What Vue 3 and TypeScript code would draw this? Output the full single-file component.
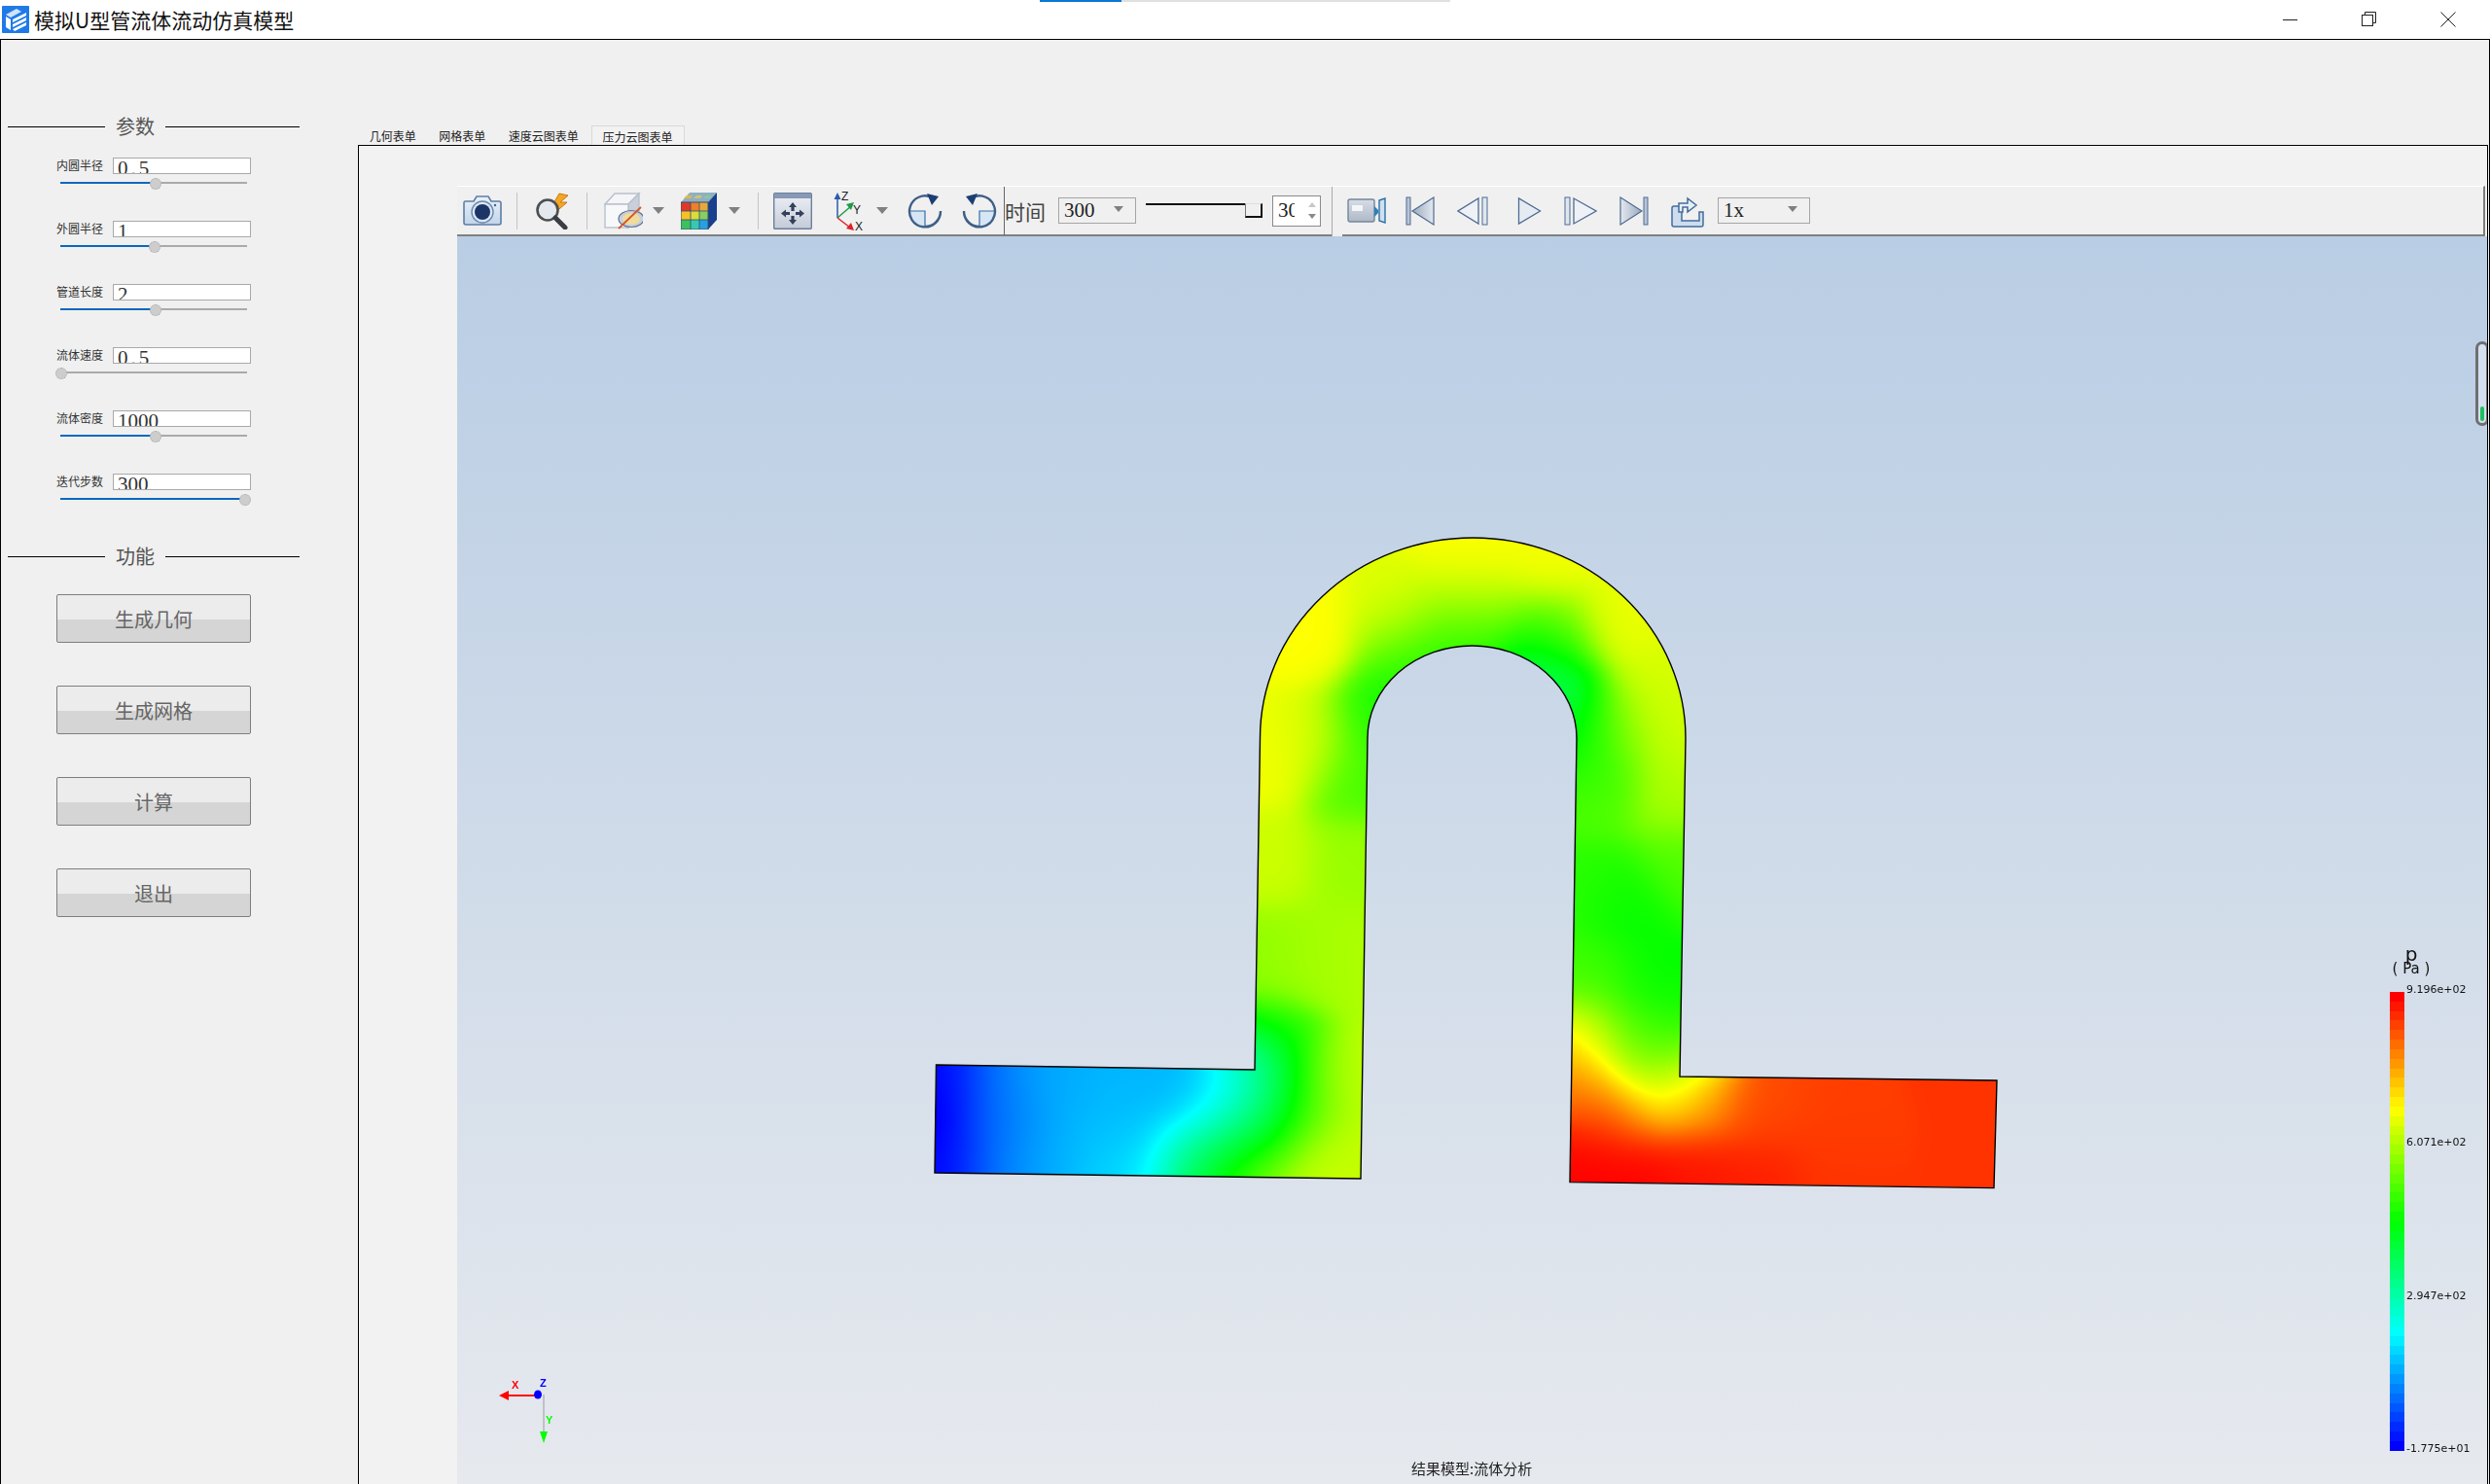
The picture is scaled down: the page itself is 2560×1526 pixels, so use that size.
<script setup lang="ts">
import { ref, onMounted } from 'vue'

const params = [
  { label: '内圆半径', value: '0.5', pos: 0.505, spaced: true },
  { label: '外圆半径', value: '1', pos: 0.5, spaced: false },
  { label: '管道长度', value: '2', pos: 0.505, spaced: false },
  { label: '流体速度', value: '0.5', pos: 0, spaced: true },
  { label: '流体密度', value: '1000', pos: 0.505, spaced: false },
  { label: '迭代步数', value: '300', pos: 0.985, spaced: false }
]
const actions = ['生成几何', '生成网格', '计算', '退出']
const tabs = ['几何表单', '网格表单', '速度云图表单', '压力云图表单']

// 0..1 -> blue, cyan, green, yellow, red
const jet = (v: number): [number, number, number] => {
  const t = Math.max(0, Math.min(1, v)) * 4
  if (t < 1) return [0, 255 * t, 255]
  if (t < 2) return [0, 255, 255 * (2 - t)]
  if (t < 3) return [255 * (t - 2), 255, 0]
  return [255, 255 * (4 - t), 0]
}

const legendBands = Array.from({ length: 48 }, (_, i) => {
  const [r, g, b] = jet(1 - i / 47)
  return `rgb(${Math.round(r)},${Math.round(g)},${Math.round(b)})`
})

// sampled pressure, x/y as read from a 1140x720 crop stretched to 1568 square
const samples: number[][] = [
  [20, 1370, -0.04], [20, 1260, 0], [20, 1490, 0], [60, 1300, 0.02], [60, 1450, 0.02],
  [120, 1370, 0.12], [120, 1280, 0.14], [120, 1470, 0.14], [200, 1300, 0.17], [200, 1450, 0.17],
  [280, 1360, 0.18], [350, 1290, 0.18], [380, 1330, 0.17], [300, 1420, 0.19], [280, 1485, 0.21], [440, 1290, 0.19],
  [470, 1290, 0.22], [490, 1305, 0.27], [440, 1360, 0.25], [400, 1420, 0.26], [345, 1490, 0.25],
  [495, 1360, 0.42], [440, 1450, 0.42], [400, 1495, 0.45], [515, 1290, 0.5], [480, 1395, 0.5],
  [430, 1495, 0.52], [535, 1360, 0.6], [475, 1495, 0.72], [495, 1200, 0.56], [565, 1300, 0.66],
  [560, 1450, 0.7], [625, 1480, 0.69], [625, 1300, 0.69], [490, 1000, 0.64], [560, 1000, 0.66],
  [630, 1000, 0.67], [500, 800, 0.7], [620, 800, 0.65], [630, 600, 0.57], [500, 550, 0.74],
  [560, 520, 0.71], [560, 300, 0.75], [650, 480, 0.52], [700, 340, 0.52], [790, 100, 0.75],
  [790, 190, 0.73], [790, 250, 0.62], [790, 305, 0.5], [680, 250, 0.72], [880, 370, 0.38],
  [930, 480, 0.43], [950, 560, 0.52], [1000, 500, 0.66], [1085, 500, 0.7], [1000, 250, 0.73],
  [900, 120, 0.74], [900, 290, 0.6], [1060, 400, 0.71], [960, 650, 0.58], [1080, 650, 0.67],
  [950, 850, 0.54], [1080, 800, 0.58], [1010, 900, 0.5], [950, 1050, 0.56], [1040, 1100, 0.5],
  [1075, 1200, 0.52], [940, 1200, 0.74], [1000, 1190, 0.6], [1040, 1240, 0.6], [1065, 1300, 0.75],
  [940, 1260, 0.82], [930, 1310, 0.94], [1000, 1350, 0.9], [1110, 1320, 0.86], [1200, 1350, 0.93],
  [1300, 1400, 0.94], [1520, 1300, 0.95], [1520, 1510, 0.95], [950, 1450, 1], [1020, 1500, 1], [1100, 1480, 0.98],
  [1200, 1510, 0.97], [1300, 1510, 0.95]
].map(([x, y, v]) => [940 + x / 1.3754, 520 + y / 2.178, v])

const pipe = 'M962.5 1095 L1290 1100 L1295.5 759 A218.75 206 0 0 1 1733 759 L1727 1107 L2053 1111 L2050 1221.6 L1614 1215.6 L1621 759 A107.5 95 0 0 0 1406 759 L1399 1212 L961 1206 Z'

const plot = ref<HTMLCanvasElement | null>(null)

const drawField = () => {
  const canvas = plot.value
  if (!canvas) return
  const ctx = canvas.getContext('2d')
  if (!ctx) return
  const x0 = 955, y0 = 548, w = 1105, h = 680
  const field = document.createElement('canvas')
  field.width = w
  field.height = h
  const fctx = field.getContext('2d')!
  const img = fctx.createImageData(w, h)
  const sigma2 = 2 * 30 * 30
  for (let j = 0; j < h; j++) {
    for (let i = 0; i < w; i++) {
      let sum = 0, total = 1e-12
      for (const s of samples) {
        const dx = i + x0 - s[0], dy = j + y0 - s[1]
        const k = Math.exp(-(dx * dx + dy * dy) / sigma2)
        sum += k * s[2]
        total += k
      }
      const [r, g, b] = jet(sum / total)
      const p = (j * w + i) * 4
      img.data[p] = r
      img.data[p + 1] = g
      img.data[p + 2] = b
      img.data[p + 3] = 255
    }
  }
  fctx.putImageData(img, 0, 0)

  ctx.translate(-470, -243)
  const path = new Path2D(pipe)
  ctx.save()
  ctx.clip(path)
  ctx.drawImage(field, x0, y0)
  ctx.restore()
  ctx.lineWidth = 1.4
  ctx.strokeStyle = '#000'
  ctx.stroke(path)
}

onMounted(drawField)
</script>

<template>
  <div class="app">
    <header class="titlebar">
      <div class="strip"><span class="strip-done"></span></div>
      <svg class="logo" width="28" height="28" viewBox="0 0 28 28">
        <rect width="28" height="28" rx="1" fill="#1f7ae8" />
        <path d="M4 9 L15 3 L20 6 L9 12 Z" fill="#cfe3fb" />
        <path d="M4 11 L9 14 V25 L4 22 Z" fill="#fff" />
        <path d="M11 14 L25 7 V10 L11 17 Z M11 19 L25 12 V15 L11 22 Z M11 24 L25 17 V20 L13 26 Z" fill="#fff" />
      </svg>
      <span class="app-title">模拟U型管流体流动仿真模型</span>
      <div class="win-btns">
        <svg width="16" height="16" viewBox="0 0 16 16"><path d="M0 8.5 H15" stroke="#222" /></svg>
        <svg width="16" height="16" viewBox="0 0 16 16" fill="none" stroke="#222"><path d="M3.5 3.5 V0.5 H14.5 V11.5 H11.5" /><rect x="0.5" y="3.5" width="11" height="11" /></svg>
        <svg width="16" height="16" viewBox="0 0 16 16"><path d="M0.5 0.5 L15.5 15.5 M15.5 0.5 L0.5 15.5" stroke="#222" /></svg>
      </div>
    </header>

    <div class="window">
      <aside class="sidebar">
        <div class="group-title first"><i></i><span>参数</span><b></b></div>
        <div class="params">
          <div v-for="p in params" :key="p.label" class="param">
            <label>{{ p.label }}</label>
            <div class="value" :class="{ spaced: p.spaced }">{{ p.value }}</div>
            <div class="slider">
              <div class="slider-fill" :style="{ width: p.pos * 100 + '%' }"></div>
              <div class="slider-knob" :style="{ left: p.pos * 100 + '%' }"></div>
            </div>
          </div>
        </div>
        <div class="group-title second"><i></i><span>功能</span><b></b></div>
        <div class="actions">
          <button v-for="a in actions" :key="a" class="action">{{ a }}</button>
        </div>
      </aside>

      <section class="tabs-wrap">
        <div class="tabs">
          <div v-for="(t, i) in tabs" :key="t" class="tab" :class="{ active: i === 3 }">{{ t }}</div>
        </div>
        <div class="pane">
          <div class="toolbar">
            <div class="tools tools-a">
              <svg class="ic cam" width="40" height="33" viewBox="0 0 40 33">
                <defs>
                  <linearGradient id="camBody" x1="0" y1="0" x2="0" y2="1"><stop offset="0" stop-color="#eaf1f9" /><stop offset="1" stop-color="#c3d5ea" /></linearGradient>
                </defs>
                <path d="M2 7 H11 L14 2 H26 L29 7 H37 Q39 7 39 9 V29 Q39 31 37 31 H3 Q1 31 1 29 V9 Q1 7 2 7 Z" fill="url(#camBody)" stroke="#5d7da6" stroke-width="1.6" />
                <circle cx="20" cy="18" r="11" fill="#dfe8f3" stroke="#6a8ab0" stroke-width="1.4" />
                <circle cx="20" cy="18" r="8" fill="#1b3566" />
                <circle cx="33" cy="11" r="1.2" fill="#47658f" />
              </svg>
              <span class="sep s15"></span>
              <svg class="ic s16" width="40" height="38" viewBox="0 0 40 38">
                <path d="M27 1 L20 13 H26 L20 23 L35 10 H28 L36 3 Z" fill="#f5a623" stroke="#c77a12" />
                <circle cx="15" cy="18" r="10.5" fill="#e4e9ee" stroke="#4c4f52" stroke-width="2.6" />
                <path d="M23 26 L33 36" stroke="#3a3d42" stroke-width="5" stroke-linecap="round" />
              </svg>
              <span class="sep s15"></span>
              <svg class="ic s17" width="40" height="39" viewBox="0 0 40 39">
                <path d="M1 13 L11 2 H36 L25 13 Z" fill="#f4f5f7" stroke="#b8c0cc" stroke-width="1.4" />
                <path d="M25 13 L36 2 V24 L25 37 Z" fill="#c9d0da" stroke="#b8c0cc" stroke-width="1.4" />
                <rect x="1" y="13" width="24" height="24" fill="#f7f8f9" stroke="#b8c0cc" stroke-width="1.4" />
                <ellipse cx="28" cy="28" rx="13" ry="8.5" fill="#c6d0dc" stroke="#5d7090" stroke-width="1.2" />
                <ellipse cx="28" cy="28" rx="9" ry="6" fill="#f0dc9a" />
                <path d="M15 38 L38 16" stroke="#d8552b" stroke-width="1.8" />
              </svg>
              <span class="caret c10"></span>
              <svg class="ic s18" width="37" height="38" viewBox="0 0 37 38">
                <path d="M0 10 L9 0 H37 L28 10 Z" fill="#8fb0c0" />
                <path d="M3 6 h7 l2 -3 h-6 Z" fill="#e0b84a" /><path d="M13 6 h7 l2 -3 h-6 Z" fill="#cfc47a" /><path d="M23 6 h6 l3 -3 h-6 Z" fill="#8ac7a0" />
                <path d="M28 10 L37 0 V28 L28 38 Z" fill="#1a3f8c" />
                <rect y="10" width="10" height="9" fill="#e0392b" /><rect x="10" y="10" width="9" height="9" fill="#ef7f2a" /><rect x="19" y="10" width="9" height="9" fill="#e9a93a" />
                <rect y="19" width="10" height="9" fill="#f5c02a" /><rect x="10" y="19" width="9" height="9" fill="#d9dc3a" /><rect x="19" y="19" width="9" height="9" fill="#86d060" />
                <rect y="28" width="10" height="10" fill="#3dc060" /><rect x="10" y="28" width="9" height="10" fill="#38c8b0" /><rect x="19" y="28" width="9" height="10" fill="#2a9fe0" />
                <path d="M0 19 H28 M0 28 H28 M10 10 V38 M19 10 V38" stroke="#2f4f6c" stroke-width="0.8" />
                <rect y="10" width="28" height="28" fill="none" stroke="#35506e" />
              </svg>
              <span class="caret c12"></span>
              <span class="sep s19"></span>
              <svg class="ic s15b" width="40" height="38" viewBox="0 0 40 38">
                <defs>
                  <linearGradient id="fitBody" x1="0" y1="0" x2="0" y2="1"><stop offset="0" stop-color="#eef0f5" /><stop offset="1" stop-color="#c4cbd8" /></linearGradient>
                </defs>
                <rect x="0.7" y="0.7" width="38.6" height="36.6" rx="1" fill="url(#fitBody)" stroke="#6d7f9b" stroke-width="1.4" />
                <rect x="1" y="1" width="38" height="5" fill="#8799b6" />
                <path d="M20 10 l4 5 h-2.4 v4 h-3.2 v-4 h-2.4 Z M20 33 l4 -5 h-2.4 v-4 h-3.2 v4 h-2.4 Z M8 21.5 l5 -4 v2.4 h4 v3.2 h-4 v2.4 Z M32 21.5 l-5 -4 v2.4 h-4 v3.2 h4 v2.4 Z" fill="#33415c" />
              </svg>
              <svg class="ic axes" width="34" height="42" viewBox="0 0 34 42">
                <path d="M5 28 V6" stroke="#2a5bb0" stroke-width="1.5" /><path d="M1.5 9 L5 2 L8.5 9 Z" fill="#2a5bb0" />
                <path d="M5 28 L19 16" stroke="#1e9a48" stroke-width="1.5" /><path d="M14 14 L22 12 L19 20 Z" fill="#1e9a48" />
                <path d="M5 28 L18 38" stroke="#e0202a" stroke-width="1.5" /><path d="M14 39 L22 41 L19 33 Z" fill="#e0202a" />
                <text x="9" y="10" class="ax">Z</text><text x="21" y="24" class="ax">Y</text><text x="23" y="41" class="ax">X</text>
              </svg>
              <span class="caret c11"></span>
              <svg class="ic s20" width="36" height="36" viewBox="0 0 36 36">
                <path d="M2 18 H18 V34 A16 16 0 0 1 2 18 Z" fill="#d6e6f5" />
                <path d="M2 18 H18 V34" stroke="#3a6ea5" stroke-width="1.2" fill="none" />
                <path d="M25 4 A16 16 0 1 0 34 18 A16 16 0 0 1 18 34" fill="none" stroke="#3e5f88" stroke-width="2.4" />
                <path d="M20 0 L32 3 L25 12 Z" fill="#1d3e73" />
              </svg>
              <svg class="ic s20" width="36" height="36" viewBox="0 0 36 36">
                <path d="M34 18 H18 V34 A16 16 0 0 0 34 18 Z" fill="#d6e6f5" />
                <path d="M34 18 H18 V34" stroke="#3a6ea5" stroke-width="1.2" fill="none" />
                <path d="M11 4 A16 16 0 1 1 2 18 A16 16 0 0 0 18 34" fill="none" stroke="#3e5f88" stroke-width="2.4" />
                <path d="M16 0 L4 3 L11 12 Z" fill="#1d3e73" />
              </svg>
              <span class="sep dark s8"></span>
              <span class="time-label">时间</span>
              <div class="combo combo-time"><span>300</span><i class="caret"></i></div>
              <div class="time-slider"><b></b><span></span></div>
              <div class="spin">
                <span class="spin-text">300</span>
                <span class="spin-arrows"><i class="up"></i><i class="down"></i></span>
              </div>
            </div>
            <span class="sep-tall"></span>
            <div class="tools tools-b">
              <svg class="ic" width="41" height="27" viewBox="0 0 41 27">
                <defs>
                  <linearGradient id="vid" x1="0" y1="0" x2="0" y2="1"><stop offset="0" stop-color="#d7dde6" /><stop offset="1" stop-color="#aeb8c6" /></linearGradient>
                </defs>
                <rect x="1" y="2" width="27" height="23" rx="2" fill="url(#vid)" stroke="#74859d" stroke-width="1.4" />
                <rect x="5" y="8" width="11" height="6" fill="#f3f5f8" />
                <path d="M28 9 L32 13 V16 L28 20 Z" fill="#2f7fb8" />
                <path d="M33 3 L39 1 V26 L33 24 Z" fill="#cfe0ee" stroke="#2d6fa5" stroke-width="1.4" />
              </svg>
              <svg class="ic t19" width="30" height="30" viewBox="0 0 30 30">
                <defs>
                  <linearGradient id="tr" x1="0" y1="0" x2="1" y2="0"><stop offset="0" stop-color="#9aa9bc" /><stop offset="1" stop-color="#e4e9f0" /></linearGradient>
                  <linearGradient id="tl" x1="0" y1="0" x2="1" y2="0"><stop offset="0" stop-color="#e4e9f0" /><stop offset="1" stop-color="#9aa9bc" /></linearGradient>
                </defs>
                <rect x="1" y="1" width="4" height="28" fill="#b9c5d6" stroke="#4f6b92" />
                <path d="M29 1 V29 L7 15 Z" fill="url(#tr)" stroke="#4f6b92" stroke-width="1.2" />
              </svg>
              <svg class="ic t23" width="32" height="30" viewBox="0 0 32 30">
                <path d="M22 2 V28 L1 15 Z" fill="#eef2f6" stroke="#4f6b92" stroke-width="1.3" />
                <rect x="26" y="1" width="5" height="28" fill="#e0e6ee" stroke="#4f6b92" />
              </svg>
              <svg class="ic t30" width="25" height="30" viewBox="0 0 25 30">
                <path d="M1.5 2 V28 L23.5 15 Z" fill="#e6ebf2" stroke="#4f6b92" stroke-width="1.3" />
              </svg>
              <svg class="ic t23" width="34" height="30" viewBox="0 0 34 30">
                <rect x="1" y="1" width="5" height="28" fill="#e0e6ee" stroke="#4f6b92" />
                <path d="M10 2 V28 L33 15 Z" fill="#eef2f6" stroke="#4f6b92" stroke-width="1.3" />
              </svg>
              <svg class="ic t23" width="30" height="30" viewBox="0 0 30 30">
                <path d="M1 1 V29 L23 15 Z" fill="url(#tl)" stroke="#4f6b92" stroke-width="1.2" />
                <rect x="25" y="1" width="4" height="28" fill="#b9c5d6" stroke="#4f6b92" />
              </svg>
              <svg class="ic t23" width="34" height="34" viewBox="0 0 34 34">
                <path d="M3 12 H11 V27 H29 V18 H33 V31 Q33 33 31 33 H3 Q1 33 1 31 V14 Q1 12 3 12 Z" fill="#cdddee" stroke="#446c9c" stroke-width="1.5" />
                <path d="M8 18 V9 H17 V4 L26 11 L17 18 V13 H12 V18 Z" fill="#e6eff8" stroke="#446c9c" stroke-width="1.5" />
              </svg>
              <div class="combo combo-speed"><span>1x</span><i class="caret"></i></div>
            </div>
          </div>

          <div class="viewer">
            <canvas ref="plot" class="plot" width="2087" height="1283"></canvas>
            <div class="pill"><i></i></div>

            <svg class="triad" width="70" height="80" viewBox="0 0 70 80">
              <path d="M50 20 V60" stroke="#9a9a9a" />
              <path d="M10 21 H46" stroke="#f00" stroke-width="2" />
              <path d="M4 21 L14 16 V26 Z" fill="#f00" />
              <ellipse cx="44" cy="20" rx="4" ry="4.5" fill="#00f" />
              <path d="M46 58 H54 L50 70 Z" fill="#0f0" />
              <text x="17" y="14" fill="#f00">X</text>
              <text x="46" y="12" fill="#00f">Z</text>
              <text x="52" y="50" fill="#0f0">Y</text>
            </svg>

            <div class="legend">
              <div class="legend-unit"><span class="unit-p">p</span><span class="unit-pa">( Pa )</span></div>
              <div class="legend-body">
                <div class="bar">
                  <i v-for="(c, i) in legendBands" :key="i" :style="{ background: c }"></i>
                </div>
                <div class="ticks">
                  <span>9.196e+02</span><span>6.071e+02</span><span>2.947e+02</span><span>-1.775e+01</span>
                </div>
              </div>
            </div>

            <div class="caption">结果模型:流体分析</div>
          </div>
        </div>
      </section>
    </div>
  </div>
</template>

<style>
html, body { margin: 0; background: #fff; }
</style>

<style scoped>
.app {
  width: 2560px;
  height: 1526px;
  display: flex;
  flex-direction: column;
  overflow: hidden;
  font-family: "Noto Sans CJK SC", "Liberation Sans", sans-serif;
}

.titlebar {
  position: relative;
  height: 40px;
  flex: none;
  display: flex;
  align-items: center;
  background: #fff;
  padding-left: 2px;
  box-sizing: border-box;
}
.strip {
  position: absolute;
  left: 1069px;
  top: 0;
  width: 422px;
  height: 2px;
  background: #e0e0e0;
}
.strip-done {
  display: block;
  width: 84px;
  height: 2px;
  background: #0a78d4;
}
.logo { flex: none; }
.app-title {
  margin-left: 5px;
  font-size: 21px;
  color: #111;
  line-height: 40px;
}
.win-btns {
  margin-left: auto;
  display: flex;
  gap: 65px;
  margin-right: 35px;
}

.window {
  flex: 1;
  min-height: 0;
  display: flex;
  border: 1px solid #000;
  border-bottom: none;
  background: #f0f0f0;
}

.sidebar {
  width: 367px;
  flex: none;
  box-sizing: border-box;
}
.group-title {
  display: flex;
  align-items: center;
  margin-left: 7px;
  width: 300px;
  height: 30px;
  font-size: 20px;
  color: #555;
}
.group-title.first { margin-top: 74px; }
.group-title.second { margin-top: 5px; }
.group-title i {
  width: 100px;
  height: 1px;
  background: #000;
}
.group-title b {
  flex: 1;
  height: 1px;
  background: #000;
}
.group-title span {
  padding: 0 11px;
  line-height: 30px;
}

.params {
  margin-top: 17px;
  padding-left: 57px;
}
.param {
  display: grid;
  grid-template-columns: 48px 142px;
  column-gap: 10px;
  grid-template-rows: 17px 48px;
  align-items: center;
}
.param label {
  font-size: 12px;
  color: #333;
  line-height: 15px;
  align-self: start;
  white-space: nowrap;
}
.value {
  box-sizing: border-box;
  height: 17px;
  border: 1px solid #a9a9a9;
  background: #fff;
  padding-left: 4px;
  font-family: "Liberation Serif", serif;
  font-size: 21px;
  line-height: 20px;
  color: #333;
  overflow: hidden;
  white-space: nowrap;
}
.value.spaced { letter-spacing: 3px; }
.slider {
  grid-column: 1 / -1;
  align-self: start;
  position: relative;
  margin: 8px 0 0 4px;
  width: 192px;
  height: 2px;
  background: #aaa;
}
.slider-fill {
  height: 2px;
  background: #0a68bd;
}
.slider-knob {
  position: absolute;
  top: -4px;
  width: 10px;
  height: 10px;
  margin-left: -5px;
  border-radius: 50%;
  background: #cdcdcd;
  border: 0.5px dotted #a8a8a8;
}

.actions {
  margin-top: 24px;
  margin-left: 57px;
  display: flex;
  flex-direction: column;
  gap: 44px;
}
.action {
  width: 200px;
  height: 50px;
  padding: 0;
  border: 1px solid #7e7e7e;
  border-radius: 2px;
  background: linear-gradient(#ececec 0, #ececec 52%, #d5d5d5 52%, #d5d5d5 100%);
  font: inherit;
  font-size: 20px;
  color: #666;
}

.tabs-wrap {
  flex: 1;
  min-width: 0;
  display: flex;
  flex-direction: column;
}
.tabs {
  height: 108px;
  flex: none;
  display: flex;
  align-items: flex-end;
  box-sizing: border-box;
}
.tab {
  padding: 0 11.75px;
  height: 20px;
  line-height: 21px;
  font-size: 12px;
  color: #222;
  box-sizing: border-box;
  white-space: nowrap;
}
.tab.active {
  background: #f2f2f2;
  border: 1px solid #d9d9d9;
  border-bottom: none;
  margin-left: 1px;
  padding: 0 11px;
}

.pane {
  flex: 1;
  min-height: 0;
  margin-right: 1px;
  border: 1px solid #000;
  border-bottom: none;
  background: #f2f2f2;
  padding: 41px 0 0 101px;
  display: flex;
  flex-direction: column;
  box-sizing: border-box;
}

.toolbar {
  height: 52px;
  flex: none;
  margin-right: 2px;
  display: flex;
  background: #f0f0f0;
  border-top: 1px solid #fff;
  box-sizing: border-box;
  border-right: 2px solid #7c7c7c;
}
.tools {
  display: flex;
  align-items: center;
  border-bottom: 2px solid #808080;
  height: 51px;
  box-sizing: border-box;
}
.tools-a { width: 899px; padding-left: 6px; box-sizing: border-box; }
.tools-b { flex: 1; padding-left: 5px; }
.sep-tall {
  width: 1px;
  background: #aaa;
  margin-right: 10px;
}
.ic { flex: none; display: block; }
.sep {
  flex: none;
  width: 1px;
  height: 38px;
  background: #c4c4c4;
}
.sep.dark { background: #666; height: 50px; }
.s15 { margin-left: 15px; }
.s16 { margin-left: 16px; }
.s17 { margin-left: 17px; }
.s18 { margin-left: 17px; }
.s19 { margin-left: 18px; }
.s15b { margin-left: 15px; }
.axes { margin-left: 21px; }
.s20 { margin-left: 20px; }
.s8 { margin-left: 7px; }
.caret {
  flex: none;
  display: block;
  width: 0;
  height: 0;
  border-left: 6px solid transparent;
  border-right: 6px solid transparent;
  border-top: 7px solid #808080;
}
.c10 { margin-left: 10px; }
.c12 { margin-left: 12px; }
.c11 { margin-left: 11px; }
.ax {
  font-family: "Liberation Sans", sans-serif;
  font-size: 12px;
  fill: #222;
}
.t19 { margin-left: 19px; }
.t23 { margin-left: 23px; }
.t30 { margin-left: 30px; }

.time-label {
  flex: none;
  width: 42px;
  font-size: 21px;
  color: #444;
  line-height: 26px;
  white-space: nowrap;
}
.combo {
  flex: none;
  height: 27px;
  box-sizing: border-box;
  border: 1px solid #a5a5a5;
  display: flex;
  align-items: center;
  font-family: "Liberation Serif", serif;
  font-size: 21px;
  color: #222;
  padding: 0 12px 0 5px;
  justify-content: space-between;
}
.combo .caret {
  border-left-width: 5px;
  border-right-width: 5px;
  border-top-width: 6px;
  margin-top: -4px;
}
.combo-time { width: 80px; margin-left: 13px; }
.combo-speed { width: 95px; margin-left: 14px; }
.time-slider {
  flex: none;
  align-self: flex-start;
  display: flex;
  width: 120px;
  height: 15px;
  margin: 17px 0 0 10px;
}
.time-slider b {
  width: 102px;
  height: 2px;
  background: #111;
}
.time-slider span {
  width: 18px;
  height: 15px;
  box-sizing: border-box;
  border-right: 2px solid #111;
  border-bottom: 2px solid #111;
  border-left: 1px solid #777;
  border-top: 1px solid #ddd;
}
.spin {
  flex: none;
  width: 50px;
  height: 32px;
  margin-left: 10px;
  box-sizing: border-box;
  border: 1px solid #8a8a8a;
  background: #fff;
  display: flex;
  align-items: center;
  font-family: "Liberation Serif", serif;
  font-size: 21px;
  color: #222;
}
.spin-text {
  width: 17px;
  margin-left: 5px;
  overflow: hidden;
  white-space: nowrap;
}
.spin-arrows {
  margin-left: 14px;
  display: flex;
  flex-direction: column;
  gap: 7px;
}
.spin-arrows i {
  display: block;
  width: 0;
  height: 0;
  border-left: 4px solid transparent;
  border-right: 4px solid transparent;
}
.spin-arrows .up { border-bottom: 5px solid #c8c8c8; }
.spin-arrows .down { border-top: 5px solid #8a8a8a; }

.viewer {
  position: relative;
  flex: 1;
  min-height: 0;
  overflow: hidden;
  background: linear-gradient(#b9cde4, #e6e9ee);
}
.plot {
  position: absolute;
  left: 0;
  top: 0;
}
.pill {
  position: absolute;
  right: -2px;
  top: 108px;
  width: 14px;
  height: 87px;
  box-sizing: border-box;
  border: 3px solid #6f6f6f;
  border-radius: 7px;
  background: #d2e0ef;
}
.pill i {
  position: absolute;
  left: 2px;
  bottom: 2px;
  width: 4px;
  height: 15px;
  border-radius: 2px;
  background: #1fbf5f;
}
.triad {
  position: absolute;
  left: 39px;
  top: 1171px;
  font-family: "Liberation Sans", sans-serif;
  font-size: 11px;
  font-weight: 700;
}
.legend {
  position: absolute;
  left: 1984px;
  top: 728px;
  font-family: "DejaVu Sans", sans-serif;
  color: #111;
}
.legend-unit {
  position: absolute;
  left: 0;
  top: 3px;
  width: 50px;
  display: flex;
  flex-direction: column;
  align-items: center;
}
.unit-p { font-size: 20px; line-height: 15px; }
.unit-pa { font-size: 15px; line-height: 15px; white-space: pre; }
.legend-body {
  position: absolute;
  left: 3px;
  top: 49px;
  display: flex;
}
.bar {
  width: 15px;
  height: 472px;
  display: flex;
  flex-direction: column;
}
.bar i { flex: 1; display: block; }
.ticks {
  margin-left: 2px;
  margin-top: -9px;
  height: 486px;
  display: flex;
  flex-direction: column;
  justify-content: space-between;
  font-size: 11px;
  line-height: 14px;
  white-space: nowrap;
}
.caption {
  position: absolute;
  left: 981px;
  top: 1258px;
  font-size: 15px;
  line-height: 18px;
  color: #222;
  white-space: nowrap;
}
</style>
